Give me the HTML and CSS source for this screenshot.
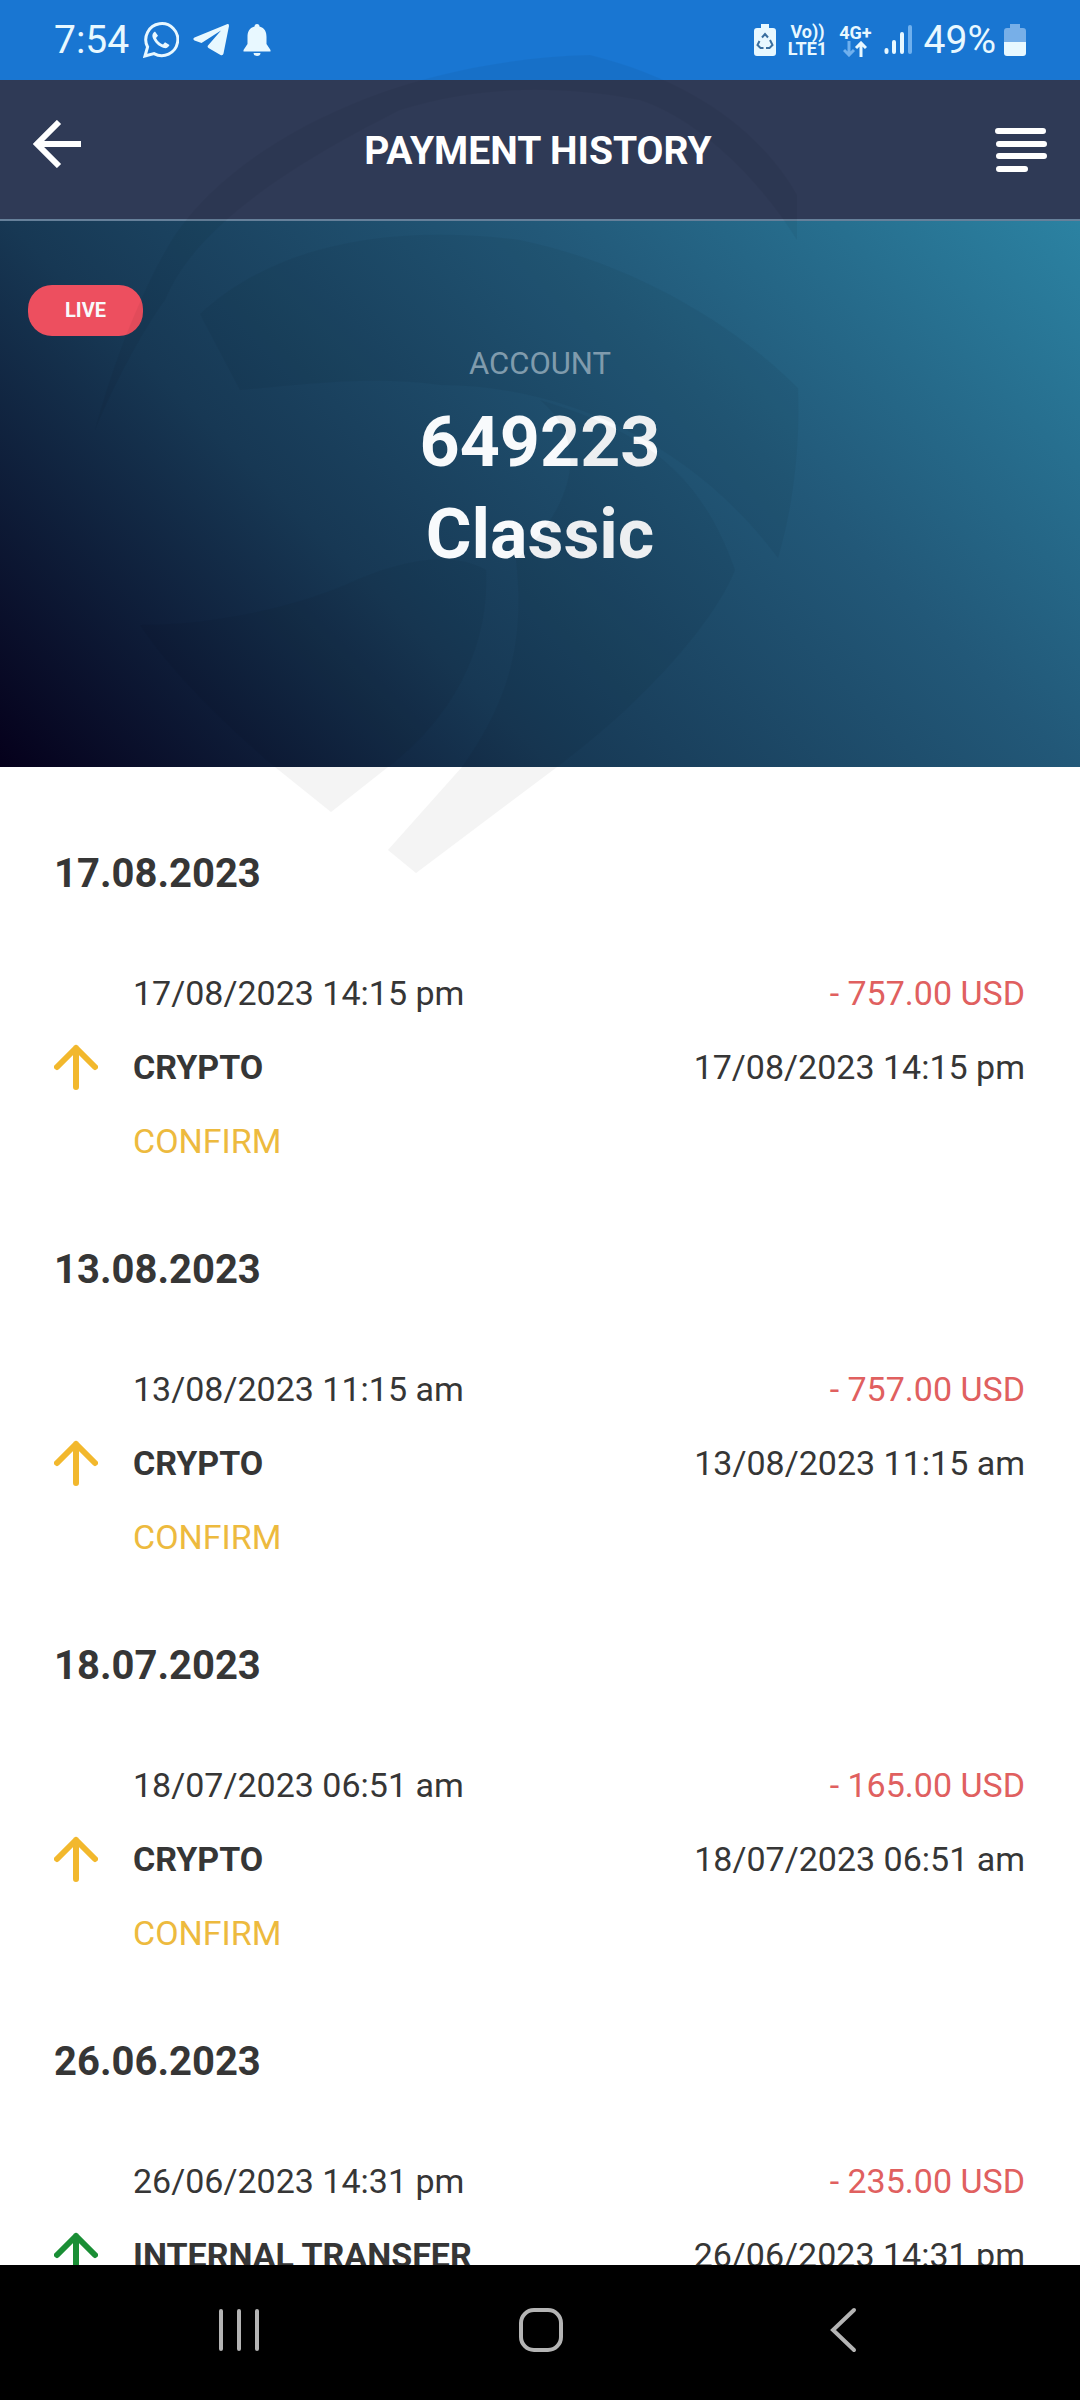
FILE: index.html
```
<!DOCTYPE html>
<html lang="en">
<head>
<meta charset="utf-8">
<meta name="viewport" content="width=device-width, initial-scale=1">
<title>Payment history</title>
<link rel="stylesheet" href="styles.css">
</head>
<body>
<div class="screen">
  <div class="status">
    <div class="status-side">
      <span class="clock">7:54</span>
      <svg viewBox="0 0 36 36" width="36" height="36" fill="none" stroke="#e8f8ff"><path d="M2 34l2.600-9A16 16 0 1 1 11 31.600z" stroke-width="3"/><path d="M12 9.500c-2 1-3 3-2.500 5.500 1.500 5 6 9.500 11.500 11 2.500.5 4.500-.5 5.500-3l-4.500-2.800-2 2.300c-3-1-5.500-3.500-7-6.500l2-2.300z" fill="#e8f8ff" stroke="none"/></svg>
      <svg viewBox="0 0 36 32" width="36" height="32" fill="#e8f8ff"><path d="M34.500 0 1.500 13.500Q-.8 15 1.500 16.500L8.500 19 28 6.500 15 21.500Q14 23 15.500 24L27.500 31Q30 32 30.500 29.500L36 2Q36-.3 34.500 0z"/></svg>
      <svg viewBox="0 0 28 32" width="28" height="32" fill="#e8f8ff"><path d="M11.500 2.500a2.500 2.500 0 0 1 5 0C22 4 23.500 8 23.500 13v7L27.500 26v1.500H.5V26l4-6v-7C4.500 8 6 4 11.500 2.500zM10.500 29h7a3.500 3 0 0 1-7 0z"/></svg>
    </div>
    <div class="status-side status-right">
      <svg viewBox="0 0 22 32" width="22" height="32"><path d="M7 0h8v4h4a3 3 0 0 1 3 3v22a3 3 0 0 1-3 3H3a3 3 0 0 1-3-3V7a3 3 0 0 1 3-3h4z" fill="#e8f8ff"/><path d="M8 13.500l3-3.500 3 3.500M16 16l2.500 5-3 3H12M9.500 24h-3l-3-3 2-4" fill="none" stroke="#3a6f9f" stroke-width="2"/></svg>
      <span class="volte"><span>Vo))</span><span>LTE1</span></span>
      <span class="net"><span>4G+</span>
        <svg viewBox="0 0 24 16" width="24" height="16" fill="none" stroke-width="3"><path d="M6 0v14M1 9l5 5 5-5" stroke="#6fb0ee"/><path d="M18 16V2M13 7l5-5 5 5" stroke="#e8f8ff"/></svg></span>
      <svg viewBox="0 0 28 30" width="28" height="30" stroke-width="4" stroke-linecap="round" stroke="#e8f8ff"><path d="M2.500 25v2M10 17v10M18 9v18"/><path d="M26 2v25" stroke="#6fb0ee"/></svg>
      <span class="charge"><span class="clock">49%</span>
      <svg viewBox="0 0 22 32" width="22" height="32"><path d="M6 0h10v4h3a3 3 0 0 1 3 3v11H0V7a3 3 0 0 1 3-3h3z" fill="#77afe8"/><path d="M0 18h22v11a3 3 0 0 1-3 3H3a3 3 0 0 1-3-3z" fill="#e8f8ff"/></svg></span>
    </div>
  </div>

  <header class="appbar">
    <button class="icon-btn back" aria-label="Back"><svg viewBox="0 0 48 48" width="48" height="48" fill="none" stroke="#fff" stroke-width="6"><path d="M26 2 4 24l22 22M4 24h44"/></svg></button>
    <h1 class="title">PAYMENT HISTORY</h1>
    <button class="icon-btn" aria-label="Menu"><svg viewBox="0 0 52 44" width="52" height="44" stroke="#fff" stroke-width="6" stroke-linecap="round"><path d="M3 3h45M4 16h45M4 28h45M4 41h26"/></svg></button>
  </header>

  <section class="hero">
    <span class="live">LIVE</span>
    <p class="acc-label">ACCOUNT</p>
    <p class="acc-value">649223</p>
    <p class="acc-value">Classic</p>
  </section>

  <main class="history">
    <section class="day">
      <h2 class="day-title">17.08.2023</h2>
      <div class="entry">
        <svg class="arrow pending" viewBox="0 0 44 46" width="44" height="46"><path d="M3 23 22 4l19 19M22 4v39"/></svg>
        <div class="left"><span>17/08/2023 14:15 pm</span><strong>CRYPTO</strong><span class="confirm">CONFIRM</span></div>
        <div class="right"><span class="amount">- 757.00 USD</span><span>17/08/2023 14:15 pm</span></div>
      </div>
    </section>
    <section class="day">
      <h2 class="day-title">13.08.2023</h2>
      <div class="entry">
        <svg class="arrow pending" viewBox="0 0 44 46" width="44" height="46"><path d="M3 23 22 4l19 19M22 4v39"/></svg>
        <div class="left"><span>13/08/2023 11:15 am</span><strong>CRYPTO</strong><span class="confirm">CONFIRM</span></div>
        <div class="right"><span class="amount">- 757.00 USD</span><span>13/08/2023 11:15 am</span></div>
      </div>
    </section>
    <section class="day">
      <h2 class="day-title">18.07.2023</h2>
      <div class="entry">
        <svg class="arrow pending" viewBox="0 0 44 46" width="44" height="46"><path d="M3 23 22 4l19 19M22 4v39"/></svg>
        <div class="left"><span>18/07/2023 06:51 am</span><strong>CRYPTO</strong><span class="confirm">CONFIRM</span></div>
        <div class="right"><span class="amount">- 165.00 USD</span><span>18/07/2023 06:51 am</span></div>
      </div>
    </section>
    <section class="day">
      <h2 class="day-title">26.06.2023</h2>
      <div class="entry">
        <svg class="arrow done" viewBox="0 0 44 46" width="44" height="46"><path d="M3 23 22 4l19 19M22 4v39"/></svg>
        <div class="left"><span>26/06/2023 14:31 pm</span><strong>INTERNAL TRANSFER</strong></div>
        <div class="right"><span class="amount">- 235.00 USD</span><span>26/06/2023 14:31 pm</span></div>
      </div>
    </section>
  </main>

  <nav class="sysnav">
    <button class="icon-btn" aria-label="Recent apps"><svg viewBox="0 0 44 46" width="44" height="46" stroke="#b4b4b4" stroke-width="4" stroke-linecap="round"><path d="M4 4v38M22 4v38M40 4v38"/></svg></button>
    <button class="icon-btn" aria-label="Home"><svg viewBox="0 0 46 46" width="46" height="46" fill="none" stroke="#b4b4b4" stroke-width="4"><rect x="3" y="3" width="40" height="40" rx="13"/></svg></button>
    <button class="icon-btn" aria-label="Back"><svg viewBox="0 0 44 46" width="44" height="46" fill="none" stroke="#b4b4b4" stroke-width="4" stroke-linecap="round"><path d="M33 3 12 23l21 20"/></svg></button>
  </nav>

  <!-- faint globe emblem laid over the top of the screen -->
  <svg class="emblem" viewBox="0 0 1080 900" aria-hidden="true">
    <path d="M590 55C400 60 240 140 175 235C150 275 120 340 95 430C120 370 150 320 165 300C190 240 260 180 400 110C480 85 560 85 640 100C700 120 760 180 797 240L797 195C760 130 690 80 590 55z"/>
    <path d="M200 314C280 240 400 225 520 240C640 265 740 330 798 388C800 440 795 500 778 558C690 440 560 385 440 385C370 375 300 385 240 390z"/>
    <path d="M140 625C230 625 310 600 345 585C400 560 450 550 486 570C490 650 450 720 388 767L331 812L275 767C220 720 170 670 140 625z"/>
    <path d="M516 560C525 640 510 700 462 767L388 850L416 873L557 767C660 690 720 610 735 570C700 470 640 430 540 400C600 450 560 520 516 560z"/>
  </svg>
</div>
</body>
</html>
```
FILE: styles.css
```
* { box-sizing: border-box; margin: 0; padding: 0; }
body { font-family: Roboto, "Liberation Sans", sans-serif; color: #363636; background: #fff; }
svg { display: block; flex: none; }
.screen { position: relative; height: 100vh; display: flex; flex-direction: column; overflow: hidden; }
.emblem { position: absolute; top: 0; left: 0; width: 100%; fill: #000; opacity: 0.04; pointer-events: none; }

.status { flex: none; height: 80px; padding: 0 54px; display: flex; justify-content: space-between; background: #1976d2; color: #e8f8ff; }
.status-side { display: flex; align-items: center; gap: 14px; }
.status-right { gap: 12px; }
.charge { display: flex; align-items: center; gap: 8px; }
.clock { font-size: 39px; line-height: 80px; }
.volte, .net { display: flex; flex-direction: column; align-items: center; font-size: 18px; line-height: 17px; font-weight: 700; }

.appbar { flex: none; height: 141px; padding: 0 33px; display: flex; align-items: center; justify-content: space-between; background: #2f3a56; border-bottom: 2px solid #66809a; }
.icon-btn { display: flex; border: 0; background: none; }
.back { padding-bottom: 12px; }
.title { padding-top: 2px; font-size: 39px; line-height: 48px; font-weight: 700; color: #fff; }

.hero { flex: none; height: 546px; padding: 64px 28px; display: flex; flex-direction: column; align-items: center; color: #f8fafc; background: linear-gradient(45deg, #05001b, #173854 34%, #225878 66%, #2b82a2); }
.live { align-self: flex-start; width: 115px; height: 51px; border-radius: 24px; background: #ed4f5f; font-size: 20px; line-height: 51px; font-weight: 700; text-align: center; }
.acc-label { margin-top: 8px; margin-bottom: 12px; font-size: 31px; line-height: 40px; color: #86a3b5; }
.acc-value { font-size: 70px; line-height: 92px; font-weight: 700; }

.history { flex: 1; min-height: 0; overflow: hidden; padding: 83px 55px 0 54px; }
.day { height: 396px; }
.day-title { font-size: 40px; line-height: 48px; font-weight: 700; }
.entry { display: grid; grid-template-columns: 79px 1fr auto; margin-top: 58px; font-size: 34px; line-height: 74px; }
.left, .right { display: flex; flex-direction: column; }
.right { text-align: right; }
.left strong { font-weight: 700; }
.arrow { margin-top: 88px; fill: none; stroke-width: 6; stroke-linecap: round; stroke-linejoin: round; }
.pending { stroke: #f2b82d; }
.done { stroke: #1a8e35; }
.confirm { color: #edba3e; }
.amount { color: #e0605f; }

.sysnav { flex: none; height: 135px; padding: 0 86px 5px 88px; display: flex; align-items: center; justify-content: space-around; background: #000; }
```
